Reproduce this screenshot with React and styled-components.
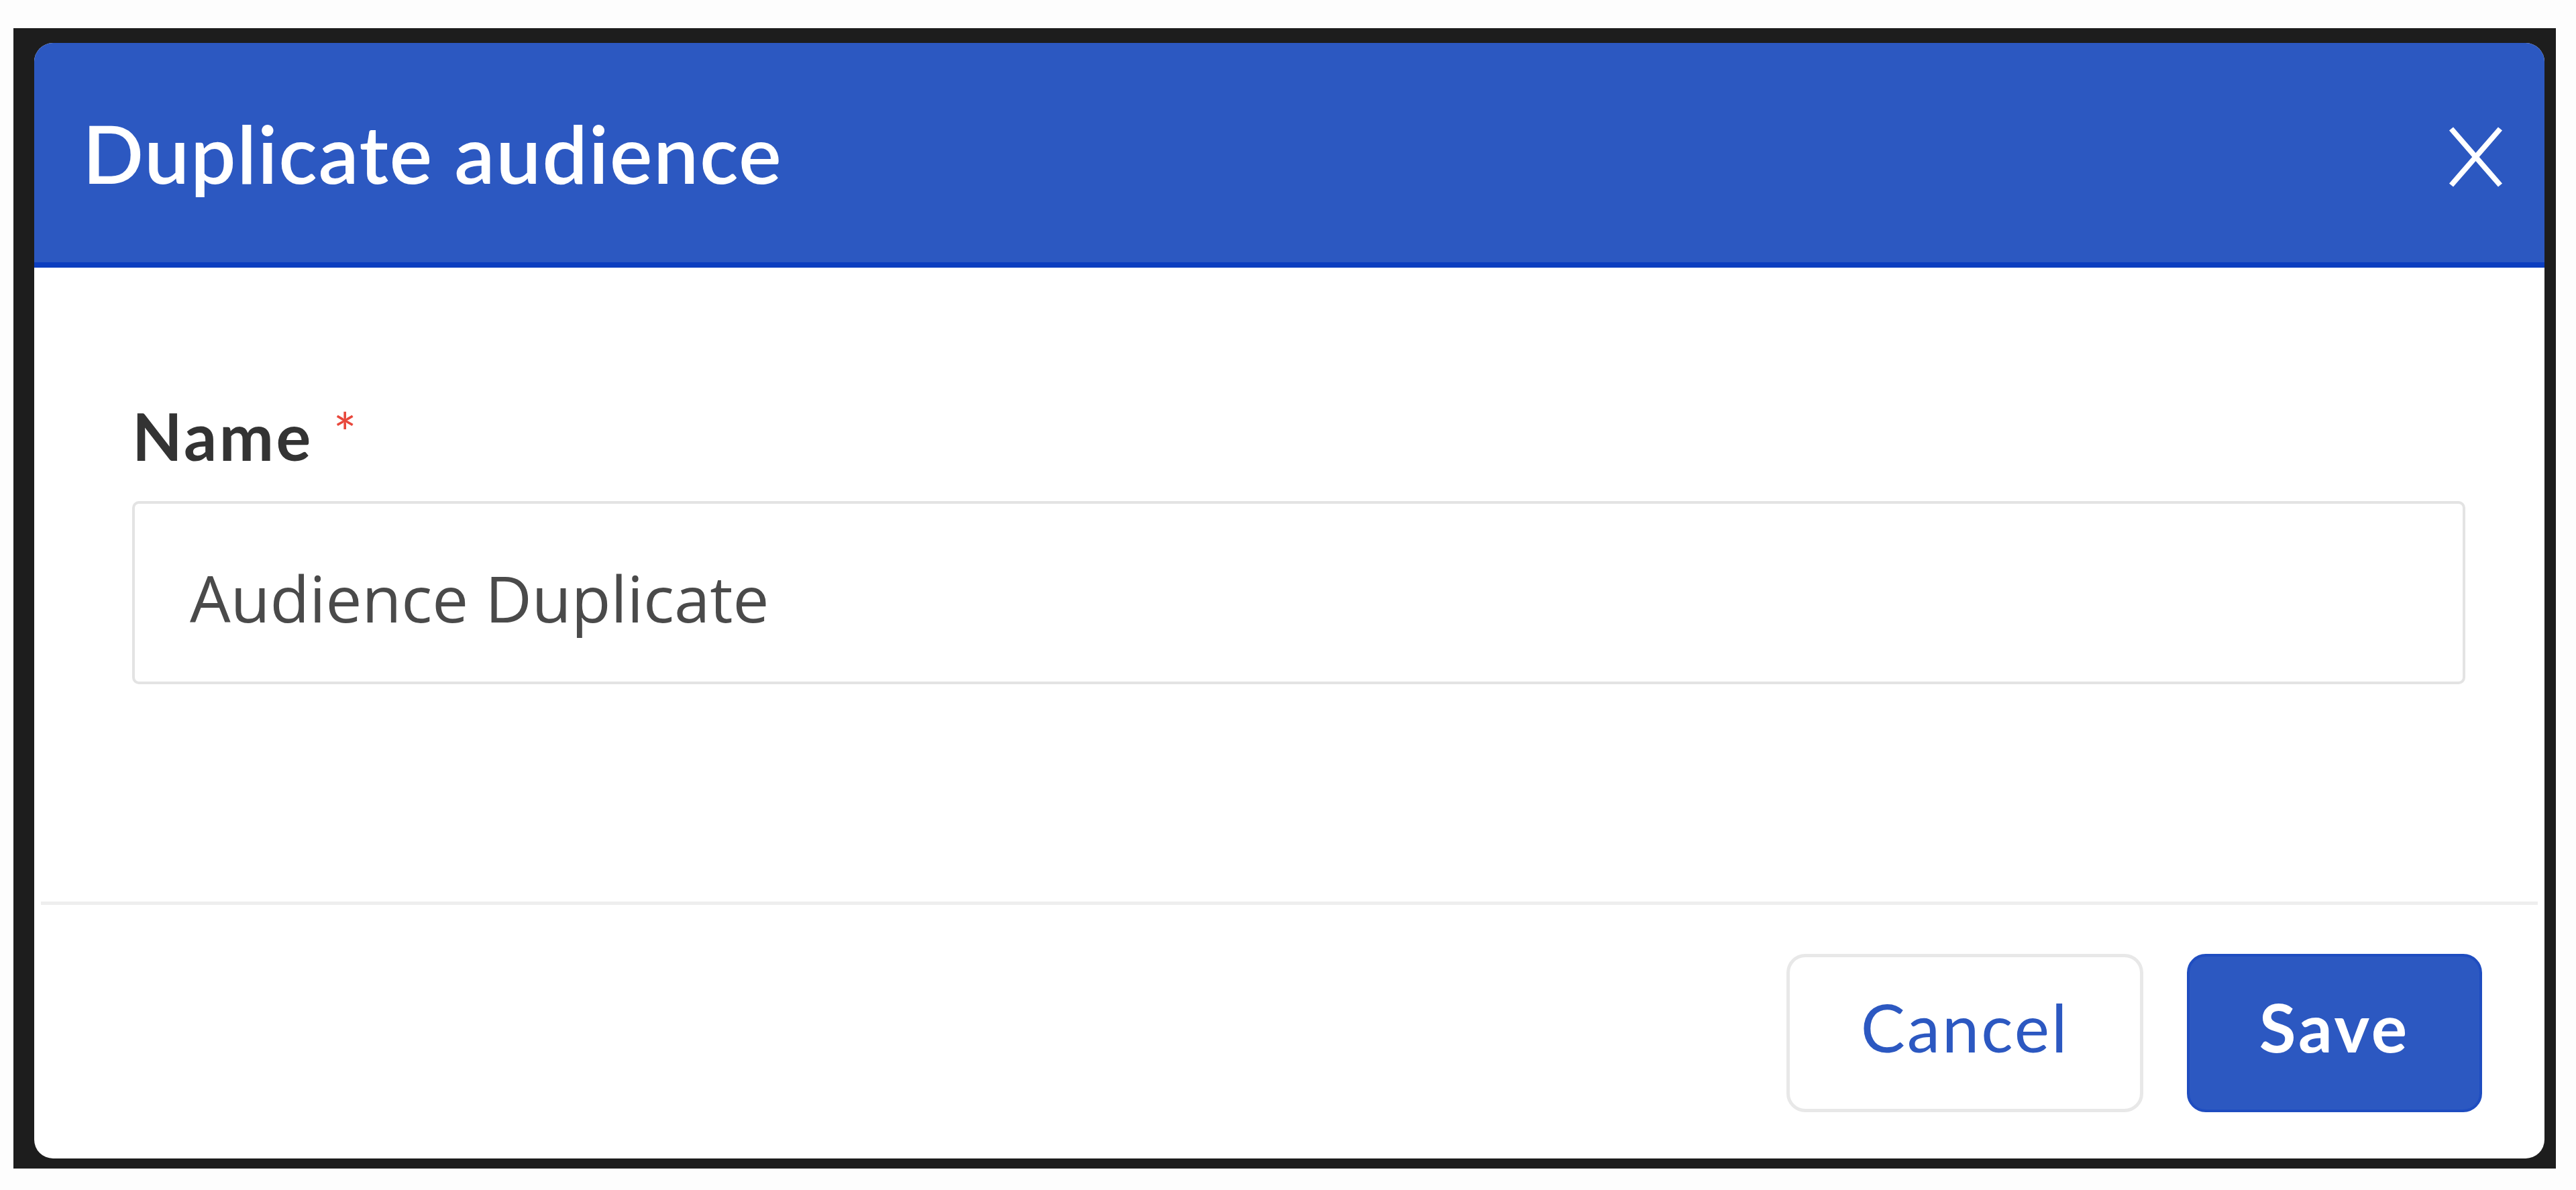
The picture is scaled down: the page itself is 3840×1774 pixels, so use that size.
import React from "react";
import styled, { createGlobalStyle } from "styled-components";

const GlobalStyle = createGlobalStyle`
  html, body {
    margin: 0;
    padding: 0;
    background: #fdfdfd;
    font-family: Lato, "Liberation Sans", sans-serif;
  }
  * { box-sizing: border-box; }
`;

const Page = styled.div`
  padding: 42px 0 0 20px;
`;

const Frame = styled.div`
  width: 3790px;
  height: 1700px;
  background: #1d1d1d;
  padding: 22px 17px 15px 31px;
  display: flex;
`;

const Dialog = styled.div`
  flex: 1;
  display: flex;
  flex-direction: column;
  background: #ffffff;
  border-radius: 28px;
  overflow: hidden;
`;

const Header = styled.div`
  height: 335px;
  flex: 0 0 auto;
  display: flex;
  align-items: center;
  justify-content: space-between;
  padding: 0 62px 0 72px;
  background: #2c58c1;
  border-bottom: 8px solid #0c3ebf;
`;

const Title = styled.h2`
  margin: 0;
  font-family: Lato, "Liberation Sans", sans-serif;
  font-weight: 600;
  font-size: 120px;
  letter-spacing: 1.6px;
  line-height: 1.2;
  color: #ffffff;
`;

const CloseButton = styled.button`
  display: flex;
  margin-top: 12px;
  padding: 0;
  border: none;
  background: none;
  cursor: pointer;
`;

const Body = styled.div`
  flex: 1;
  display: flex;
  flex-direction: column;
  padding: 193px 118px 0 146px;
`;

const Label = styled.label`
  display: block;
  margin-bottom: 39px;
  font-family: Lato, "Liberation Sans", sans-serif;
  font-weight: 700;
  font-size: 97px;
  letter-spacing: 3.5px;
  line-height: 1.2;
  color: #333333;
`;

const Required = styled.span`
  margin-left: 30px;
  font-size: 82px;
  font-weight: 400;
  color: #e8473b;
  vertical-align: 12px;
`;

const TextInput = styled.input`
  display: block;
  width: 100%;
  height: 273px;
  padding: 13px 0 0 82px;
  border: 4px solid #e3e3e3;
  border-radius: 10px;
  background: #ffffff;
  font-family: "Open Sans", "Noto Sans", sans-serif;
  font-size: 96px;
  color: #4a4a4a;
  outline: none;
`;

const Divider = styled.div`
  height: 5px;
  flex: 0 0 auto;
  margin: 0 10px;
  background: #eeeeee;
`;

const Footer = styled.div`
  flex: 0 0 auto;
  display: flex;
  justify-content: flex-end;
  gap: 65px;
  padding: 73px 93px 69px 0;
`;

const Button = styled.button`
  width: ${(p) => (p.$primary ? "440px" : "532px")};
  height: 236px;
  padding: 0 0 20px;
  border-radius: 28px;
  border: ${(p) => (p.$primary ? "4px solid #1f4dc0" : "5px solid #e8e8e8")};
  background: ${(p) => (p.$primary ? "#2c58c1" : "#ffffff")};
  color: ${(p) => (p.$primary ? "#ffffff" : "#2c58c1")};
  font-family: Lato, "Liberation Sans", sans-serif;
  font-weight: ${(p) => (p.$primary ? 700 : 400)};
  font-size: ${(p) => (p.$primary ? "100px" : "99px")};
  letter-spacing: ${(p) => (p.$primary ? "4px" : "3px")};
  cursor: pointer;
`;

function CloseIcon() {
  return (
    <svg width="81" height="92" viewBox="0 0 81 92" fill="none">
      <path d="M4 4 L77 88 M77 4 L4 88" stroke="#ffffff" strokeWidth="8" />
    </svg>
  );
}

export default function App() {
  return (
    <>
      <GlobalStyle />
      <Page>
        <Frame>
          <Dialog>
            <Header>
              <Title>Duplicate audience</Title>
              <CloseButton aria-label="Close">
                <CloseIcon />
              </CloseButton>
            </Header>
            <Body>
              <Label htmlFor="name">
                Name<Required>*</Required>
              </Label>
              <TextInput id="name" defaultValue="Audience Duplicate" readOnly />
            </Body>
            <Divider />
            <Footer>
              <Button>Cancel</Button>
              <Button $primary>Save</Button>
            </Footer>
          </Dialog>
        </Frame>
      </Page>
    </>
  );
}
